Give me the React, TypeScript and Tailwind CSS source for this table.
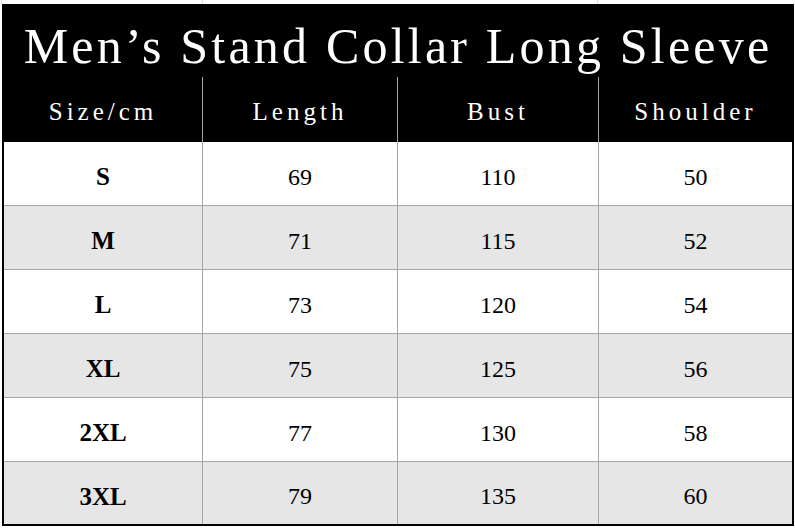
import React from "react";

const rows = [
  { size: "S", length: "69", bust: "110", shoulder: "50" },
  { size: "M", length: "71", bust: "115", shoulder: "52" },
  { size: "L", length: "73", bust: "120", shoulder: "54" },
  { size: "XL", length: "75", bust: "125", shoulder: "56" },
  { size: "2XL", length: "77", bust: "130", shoulder: "58" },
  { size: "3XL", length: "79", bust: "135", shoulder: "60" },
];

const headers = ["Size/cm", "Length", "Bust", "Shoulder"];

const cols = "grid grid-cols-[199px_195px_201px_193px]";

export default function App() {
  return (
    <div className="w-[795px] h-[528px] bg-white font-['Liberation_Serif',serif] text-black">
      {/* spreadsheet gridlines above the table */}
      <div className="flex h-1">
        <div className="w-px" />
        <div className="w-[201px] border-l border-[#d9d9d9]" />
        <div className="w-[395px] border-l border-[#d9d9d9]" />
        <div className="flex-1 border-l border-[#d9d9d9]" />
      </div>

      <div className="ml-[2px] w-[792px] h-[522px] border-2 border-black flex flex-col">
        <div className="h-[71px] bg-black text-white flex items-center justify-center pt-2 text-[50px] leading-none tracking-[3.2px]">
          Men’s Stand Collar Long Sleeve
        </div>

        <div className={`${cols} h-[65px] bg-black text-white`}>
          {headers.map((h, i) => (
            <div
              key={h}
              className={`flex items-center justify-center pt-1 text-[25px] leading-none tracking-[4px] ${
                i < headers.length - 1 ? "border-r border-[#a6a6a6]" : ""
              }`}
            >
              {h}
            </div>
          ))}
        </div>

        {rows.map((r, idx) => {
          const last = idx === rows.length - 1;
          return (
            <div
              key={r.size}
              className={`${cols} ${last ? "h-[62px]" : "h-16 border-b border-[#a6a6a6]"} ${
                idx % 2 === 1 ? "bg-[#e6e6e6]" : "bg-white"
              }`}
            >
              <div className="flex items-center justify-center pt-1.5 border-r border-[#a6a6a6] text-[25px] font-bold leading-none">
                {r.size}
              </div>
              <div className="flex items-center justify-center pt-1.5 border-r border-[#a6a6a6] text-[24px] leading-none">
                {r.length}
              </div>
              <div className="flex items-center justify-center pt-1.5 border-r border-[#a6a6a6] text-[24px] leading-none">
                {r.bust}
              </div>
              <div className="flex items-center justify-center pt-1.5 text-[24px] leading-none">
                {r.shoulder}
              </div>
            </div>
          );
        })}
      </div>
    </div>
  );
}
